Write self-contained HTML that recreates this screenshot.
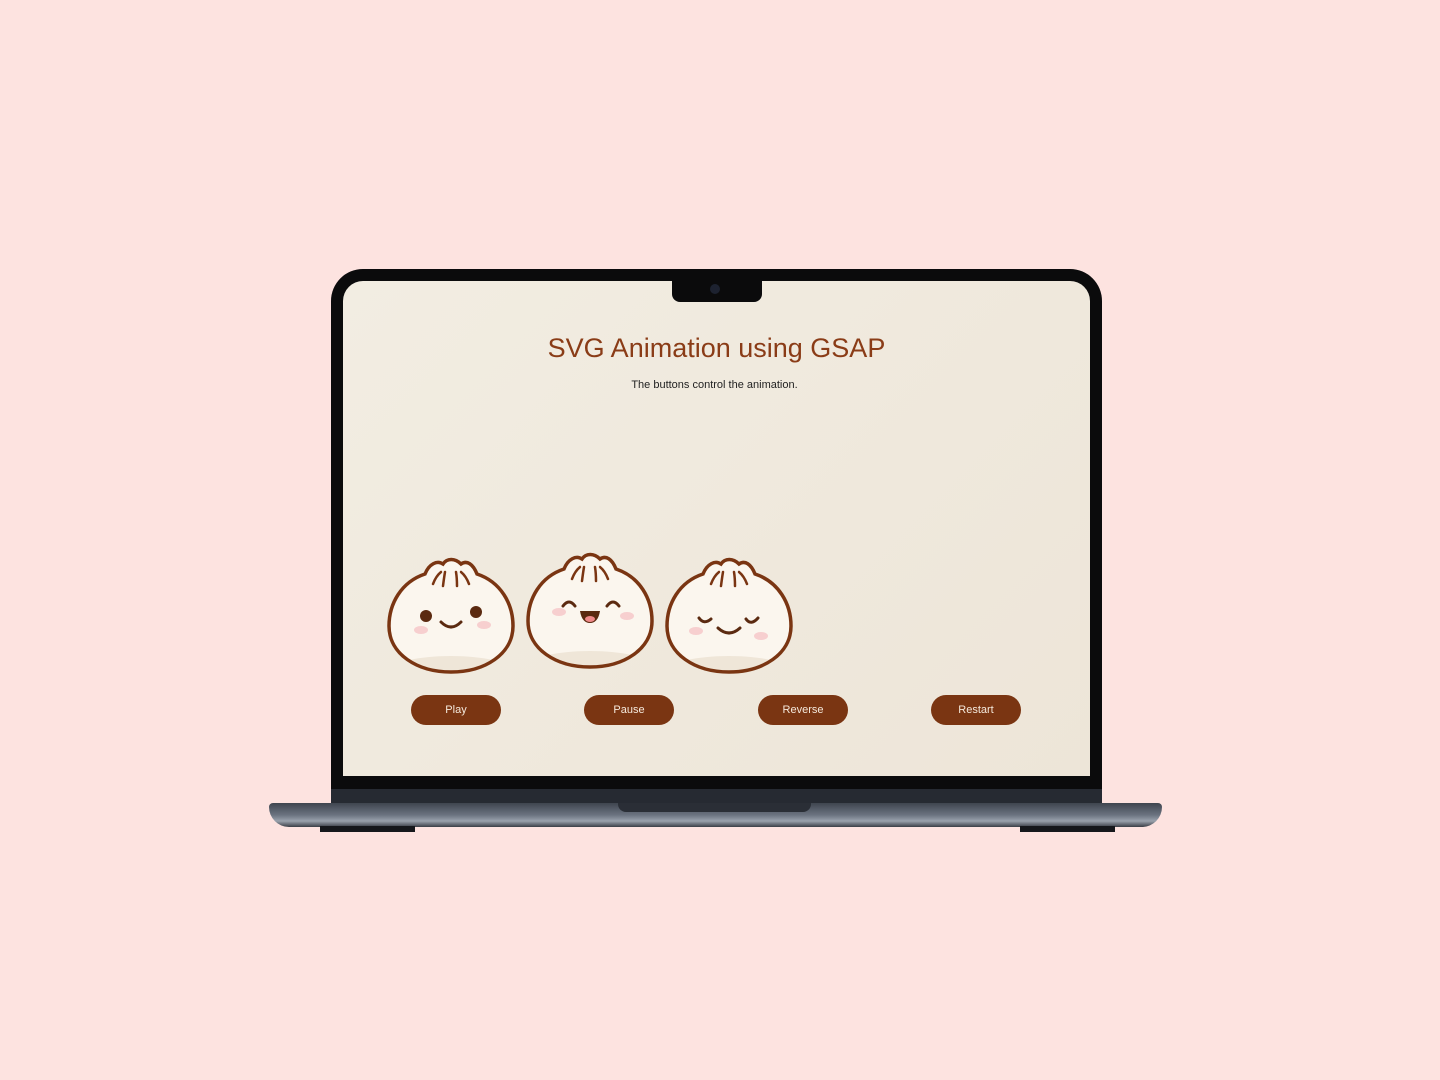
<!DOCTYPE html>
<html><head><style>
body{margin:0;width:1440px;height:1080px;background:#fde3e0;position:relative;overflow:hidden;font-family:"Liberation Sans",sans-serif}
.abs{position:absolute}
.btn{position:absolute;top:695px;width:90px;height:30px;border-radius:15px;background:#7a3512;color:#f5e9dc;font-size:11px;line-height:30px;text-align:center}
</style></head><body>
<div class="abs" style="left:331px;top:269px;width:771px;height:535px;background:#0b0b0c;border-radius:32px 32px 0 0"></div>
<div class="abs" style="left:343px;top:281px;width:747px;height:495px;background:linear-gradient(135deg,#f2ede2,#ede5d8);border-radius:20px 20px 0 0"></div>
<div class="abs" style="left:672px;top:278px;width:90px;height:24px;background:#0b0b0c;border-radius:0 0 8px 8px"></div>
<div class="abs" style="left:710px;top:284px;width:10px;height:10px;background:#1d2230;border-radius:50%"></div>
<div class="abs" style="left:331px;top:789px;width:771px;height:15px;background:#262a32"></div>
<div class="abs" style="left:269px;top:803px;width:893px;height:24px;background:linear-gradient(#3f454f,#6b7380 50%,#9aa2ad 75%,#3a3e46);border-radius:4px 4px 20px 20px"></div>
<div class="abs" style="left:618px;top:803px;width:193px;height:9px;background:#2a2e36;border-radius:0 0 8px 8px"></div>
<div class="abs" style="left:320px;top:826px;width:95px;height:6px;background:#16181c"></div>
<div class="abs" style="left:1020px;top:826px;width:95px;height:6px;background:#16181c"></div>
<div class="abs" style="left:343px;top:333px;width:747px;text-align:center;color:#8a3c17;font-size:27px">SVG Animation using GSAP</div>
<div class="abs" style="left:343px;top:379px;width:743px;text-align:center;color:#222;font-size:11px">The buttons control the animation.</div>
<svg class="abs" style="left:0;top:0" width="1440" height="1080">
<defs>
<clipPath id="cp"><path id="shape" d="M-26,-44 C-50,-36 -62,-14 -62,8 C-62,36 -34,54 0,54 C34,54 62,36 62,8 C62,-14 50,-36 26,-44 C22,-54 16,-58 10,-54 C4,-60 -4,-60 -8,-54 C-14,-58 -22,-54 -26,-44Z"/></clipPath>
<g id="bun">
<use href="#shape" fill="#fbf6ee"/>
<ellipse cx="0" cy="52" rx="60" ry="14" fill="#efe6d8" clip-path="url(#cp)"/>
<use href="#shape" fill="none" stroke="#7a3512" stroke-width="3.5"/>
<path d="M-18,-34 q3,-8 8,-12 M-8,-32 q1,-8 2,-14 M6,-32 q0,-8 -1,-14 M18,-34 q-3,-8 -8,-12" stroke="#7a3512" stroke-width="2.5" fill="none" stroke-linecap="round"/>
</g></defs>
<g transform="translate(451,618)"><use href="#bun"/><circle cx="-25" cy="-2" r="6" fill="#5b2a10"/><circle cx="25" cy="-6" r="6" fill="#5b2a10"/><path d="M-10,4 q10,10 20,0" stroke="#5b2a10" stroke-width="3" fill="none" stroke-linecap="round"/><ellipse cx="-30" cy="12" rx="7" ry="4" fill="#f7cfcf"/><ellipse cx="33" cy="7" rx="7" ry="4" fill="#f7cfcf"/></g>
<g transform="translate(590,613)"><use href="#bun"/><path d="M-27,-7 q6,-8 12,0 M17,-7 q6,-8 12,0" stroke="#5b2a10" stroke-width="3" fill="none" stroke-linecap="round"/><path d="M-10,-2 h20 q-2,12 -10,12 q-8,0 -10,-12z" fill="#5b2a10"/><ellipse cx="0" cy="6" rx="5" ry="3" fill="#f08a8a"/><ellipse cx="-31" cy="-1" rx="7" ry="4" fill="#f7cfcf"/><ellipse cx="37" cy="3" rx="7" ry="4" fill="#f7cfcf"/></g>
<g transform="translate(729,618)"><use href="#bun"/><path d="M-30,0 q5,7 12,1 M17,1 q5,7 12,-1" stroke="#5b2a10" stroke-width="3" fill="none" stroke-linecap="round"/><path d="M-11,10 q11,10 22,0" stroke="#5b2a10" stroke-width="3" fill="none" stroke-linecap="round"/><ellipse cx="-33" cy="13" rx="7" ry="4" fill="#f7cfcf"/><ellipse cx="32" cy="18" rx="7" ry="4" fill="#f7cfcf"/></g>
</svg>
<div class="btn" style="left:411px">Play</div>
<div class="btn" style="left:584px">Pause</div>
<div class="btn" style="left:758px">Reverse</div>
<div class="btn" style="left:931px">Restart</div>
</body></html>
